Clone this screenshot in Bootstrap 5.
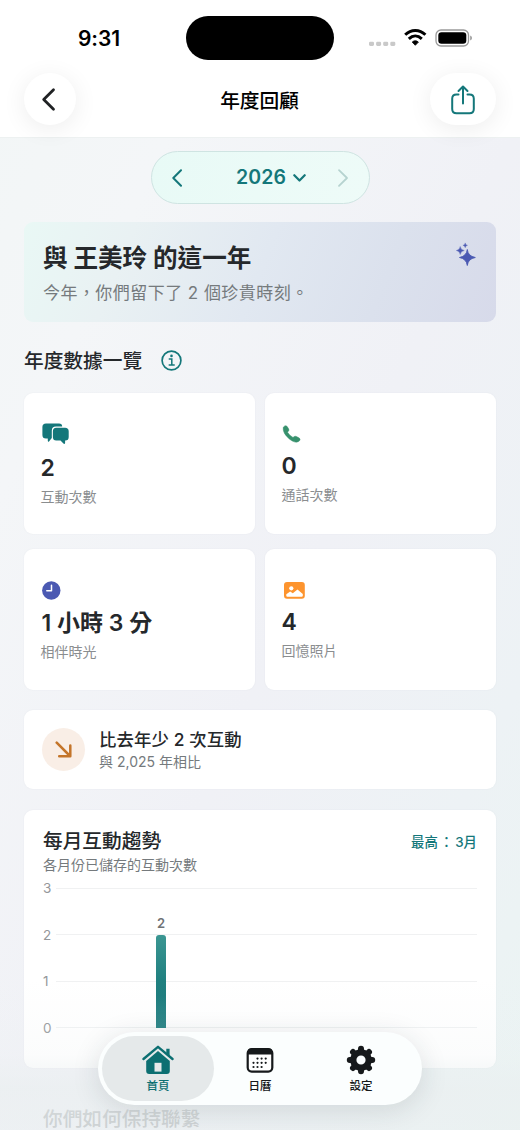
<!DOCTYPE html>
<html lang="zh-Hant">
<head>
<meta charset="utf-8">
<meta name="viewport" content="width=device-width, initial-scale=1">
<title>年度回顧</title>
<link href="https://cdn.jsdelivr.net/npm/bootstrap@5.3.0/dist/css/bootstrap.min.css" rel="stylesheet">
<style>
  :root { --teal: #14777a; --ink: #25282b; --soft: #757a7d; --indigo: #4b59b2; }
  html, body { height: 1130px; overflow: hidden; }
  body {
    font-family: Inter, "Noto Sans CJK TC", sans-serif; color: var(--ink);
    background: linear-gradient(115deg, #f2f6f6 0%, #f4f6f8 22%, #f0f1f6 55%, #edf2f5 80%, #ebf4f3 100%);
  }
  svg { display: block; flex: none; }
  .screen { width: 520px; height: 1130px; }
  .topbar { height: 138px; background: #fff; border-bottom: 1px solid #edf1f1; }
  .status { height: 72px; padding: 16px 48px 0 78px; }
  .clock { font-size: 21px; font-weight: 600; line-height: 46px; width: 108px; letter-spacing: -.1px; color: #000; }
  .island { width: 148px; height: 44px; border-radius: 22px; background: #000; }
  .titlebar { height: 54px; padding: 0 24px; }
  .round-btn { height: 52px; border-radius: 26px; background: #fff; box-shadow: 0 4px 24px rgba(0,0,0,.075); border: 0; padding: 0; }
  .page-title { font-size: 19.7px; font-weight: 500; line-height: 30px; color: #000; }
  .md { font-weight: 500; }
  .year-pill { width: 219px; height: 53px; border-radius: 27px; margin: 13px 0 0 150.5px; padding: 0 19px 0 20px; background: linear-gradient(100deg, #e8faf6, #eefbf8); border: 1px solid #cfe4e2; color: var(--teal); }
  .year-num { font-size: 19.5px; font-weight: 600; letter-spacing: .1px; }
  .hero { height: 100px; margin: 18px 24px 0; padding: 19px 20px 0 19px; border-radius: 9px; background: linear-gradient(112deg, #e9f8f5 0%, #e9f1f3 22%, #e1e8f1 50%, #dbe1ed 75%, #d7daea 100%); }
  .hero h1 { font-size: 24.6px; line-height: 34px; font-weight: 700; margin: 0; white-space: nowrap; }
  .hero p { font-size: 17px; letter-spacing: .45px; line-height: 26px; margin: 5px 0 0; color: var(--soft); white-space: nowrap; }
  .sec-title { font-size: 19.7px; line-height: 30px; margin: 0; white-space: nowrap; }
  .tile { border-radius: 9px; background: #fff; box-shadow: 0 0 2px rgba(30,50,80,.05); }
  .stats { display: grid; grid-template-columns: 231px 231px; grid-auto-rows: 141px; gap: 15px 10px; margin: 17px 24px 0; }
  .stat { padding: 27px 17px 0 16.5px; }
  .stat-ico { height: 28px; display: flex; align-items: center; }
  .stat-num { font-size: 23px; line-height: 30px; font-weight: 600; margin-top: 3px; white-space: nowrap; }
  .stat-lab { font-size: 14px; line-height: 20px; margin-top: 4px; color: #8a8d8f; }
  .compare { height: 79px; margin: 20px 24px 0; padding: 0 18px; }
  .disc { width: 43px; height: 43px; border-radius: 50%; background: #f9eee6; }
  .cmp-h { font-size: 17.4px; line-height: 24px; white-space: nowrap; letter-spacing: .1px; }
  .cmp-s { font-size: 14px; line-height: 20px; color: var(--soft); white-space: nowrap; }
  .trend { height: 258px; margin: 21px 24px 0; padding: 16px 19px 0; }
  .peak { font-size: 13.4px; font-weight: 500; color: var(--teal); line-height: 20px; margin-top: 6px; white-space: nowrap; }
  .peak span { padding: 0 2px; }
  .plot { margin-top: 5px; height: 160px; }
  .gridrow { height: 20px; margin-bottom: 26.5px; font-size: 13.5px; line-height: 20px; color: #94979a; }
  .gridrow span { width: 13px; }
  .gridrow i { flex: 1; height: 1px; background: #f0f1f2; }
  .bar-col { left: 113px; top: 46px; width: 10px; }
  .bar-val { font-size: 13px; line-height: 16px; font-weight: 600; color: #6f7376; position: absolute; top: -20px; }
  .bar-fill { width: 10px; height: 93px; border-radius: 3px 3px 0 0; background: linear-gradient(#3b9692, #17797a 65%, #1b7c7e); position: absolute; top: 0; }
  .next-title { margin: 40px 43px 0; line-height: 22px; color: #a9adaf; }
  .fade-bottom { left: 0; right: 0; bottom: 0; height: 150px; background: linear-gradient(rgba(234,239,240,0), rgba(234,239,240,.18) 50%, rgba(234,239,240,.72) 72%, rgba(234,239,240,.55)); pointer-events: none; }
  .tabbar { left: 98px; top: 1032px; width: 324px; height: 73px; border-radius: 37px; padding: 4px 4px; background: #fbfefe; box-shadow: 0 5px 28px rgba(30,50,55,.13); }
  .tab-item { font-size: 11.5px; line-height: 16px; font-weight: 500; color: #16191b; height: 65px; border-radius: 33px; padding-top: 8px; }
  .tab-item svg { margin-bottom: 2px; }
  .tab-item.on { background: #e5e9ea; color: #0c6f72; }
</style>
</head>
<body>
<div class="screen position-relative overflow-hidden">
  <header class="topbar">
    <div class="status d-flex">
      <div class="clock">9:31</div>
      <div class="island"></div>
      <div class="d-flex align-items-center ms-auto" style="height:44px">
        <svg width="103" height="24" viewBox="0 0 103 24">
          <g fill="#c9c9c9"><rect x="0" y="15.7" width="5" height="4.2" rx="1.3"/><rect x="7.1" y="15.7" width="5" height="4.2" rx="1.3"/><rect x="14.2" y="15.7" width="5" height="4.2" rx="1.3"/><rect x="21.3" y="15.7" width="5" height="4.2" rx="1.3"/></g>
          <g fill="none" stroke="#000" stroke-width="3"><path d="M36.200 8.700C42 3 50.600 3 56.400 8.700"/><path d="M39.800 12.800C43.800 9.100 48.800 9.100 52.800 12.800"/></g>
          <path d="M43.200 16.100C45.300 14.200 47.300 14.200 49.400 16.100L46.300 19.300Z" fill="#000" stroke="#000" stroke-width=".8" stroke-linejoin="round"/>
          <rect x="67" y="4" width="32.500" height="16" rx="5" fill="none" stroke="#9a9a9a" stroke-width="1.300"/>
          <rect x="69.300" y="6.300" width="28" height="11.400" rx="3.200"/>
          <path d="M101.200 9.400Q103 10.200 103 12T101.200 14.600Z" fill="#9a9a9a"/>
        </svg>
      </div>
    </div>
    <div class="titlebar d-flex align-items-center position-relative">
      <button class="round-btn d-flex align-items-center justify-content-center" style="width:52px" aria-label="返回">
        <svg width="20" height="26" viewBox="0 0 20 26" fill="none" stroke="#202224" stroke-width="2.800" stroke-linecap="round" stroke-linejoin="round"><path d="M13.500 3.700L3.700 13.500L13.500 23.300"/></svg>
      </button>
      <div class="page-title md flex-fill text-center" style="margin:3px 0 0 13px">年度回顧</div>
      <button class="round-btn d-flex align-items-center justify-content-center" style="width:66px" aria-label="分享">
        <svg width="26" height="32" viewBox="0 0 26 32" fill="none" stroke="#14777a" stroke-width="2" stroke-linecap="round" stroke-linejoin="round"><path d="M8.500 11.500H6.500Q2.200 11.500 2.200 15.800V26Q2.200 30.300 6.500 30.300H19.500Q23.800 30.300 23.800 26V15.800Q23.800 11.500 19.500 11.500H17.500M13 20.500V3.500M8.500 8L13 3.500L17.500 8"/></svg>
      </button>
    </div>
  </header>

  <div class="year-pill d-flex align-items-center justify-content-between">
    <svg width="12" height="20" viewBox="0 0 12 20" fill="none" stroke="currentColor" stroke-width="2" stroke-linecap="round" stroke-linejoin="round"><path d="M9 2.200L1.300 10L9 17.800"/></svg>
    <div class="d-flex align-items-center" style="gap:7px;margin-left:21px">
      <span class="year-num">2026</span>
      <svg width="13" height="8" viewBox="0 0 13 8" fill="none" stroke="currentColor" stroke-width="2.200" stroke-linecap="round" stroke-linejoin="round"><path d="M1.300 1.200L6.500 6.500L11.700 1.200"/></svg>
    </div>
    <svg width="12" height="20" viewBox="0 0 12 20" fill="none" stroke="#b6d3d0" stroke-width="1.800" stroke-linecap="round" stroke-linejoin="round"><path d="M2 2.200L10 10L2 17.800"/></svg>
  </div>

  <section class="hero d-flex justify-content-between">
    <div>
      <h1>與 王美玲 的這一年</h1>
      <p>今年，你們留下了 2 個珍貴時刻。</p>
    </div>
    <svg width="20" height="24" viewBox="0 0 20 24" fill="#4b59b2" style="margin-top:1px"><path d="M11.300 7.500Q12 14.200 19.300 15.500Q12 16.800 11.300 23.500Q10.500 16.800 3.500 15.500Q10.500 14.200 11.300 7.500Z" stroke="#4b59b2" stroke-width=".9"/><path d="M4.200 4.500Q4.600 7.900 8.200 8.500Q4.600 9.100 4.200 12.500Q3.800 9.100 .4 8.500Q3.800 7.900 4.200 4.500Z" stroke="#4b59b2" stroke-width=".4"/><path d="M9.200 .9Q9.500 3 11.500 3.300Q9.500 3.600 9.200 5.700Q8.900 3.600 6.900 3.300Q8.900 3 9.200 .9Z" stroke="#4b59b2" stroke-width=".3"/></svg>
  </section>

  <div class="d-flex align-items-center" style="margin:24px 24px 0;gap:19px">
    <h2 class="sec-title md">年度數據一覽</h2>
    <svg width="21" height="21" viewBox="0 0 21 21" fill="none" stroke="#14777a" style="margin-bottom:2px"><circle cx="10.500" cy="10.500" r="9.400" stroke-width="1.700"/><circle cx="10.500" cy="5.900" r="1.300" fill="#14777a" stroke="none"/><path d="M8.300 9H10.800V15M8.200 15.100H13.200" stroke-width="1.500" stroke-linecap="round"/></svg>
  </div>

  <section class="stats">
    <div class="tile stat">
      <div class="stat-ico"><svg width="28" height="22" viewBox="0 0 28 22" fill="#14777a" style="margin-left:1px"><path d="M4 .5H17Q20.200 .5 20.200 3.600H14Q9.800 3.600 9.800 7.800V15L7 18.500Q6 19.300 5.800 17.800V15.500H4Q.4 15.500 .4 12V4Q.4 .5 4 .5Z"/><path d="M14.200 4.700H23Q26.700 4.700 26.700 8.200V14Q26.700 17.600 23.300 17.600H23.100V20Q22.800 21.700 21.400 20.600L18.500 17.600H14.200Q10.900 17.600 10.900 14V8.200Q10.900 4.700 14.200 4.700Z"/></svg></div>
      <div class="stat-num" style="margin-top:5px">2</div><div class="stat-lab">互動次數</div>
    </div>
    <div class="tile stat">
      <div class="stat-ico"><svg width="19" height="18" viewBox="0 0 19 18" fill="#37916d" stroke="#37916d" stroke-width=".5"><path d="M1.300 2.200L2.800 .9Q4.100 .3 5.200 1.600L6.700 4Q7.300 5.300 6.300 6.200L5.500 7.200Q7.300 10.400 11 12.500L12.200 11.600Q13.100 10.900 14.400 11.500L17.300 13.100Q18.600 14.300 17.700 15.500L16.200 16.700Q12.400 18.300 7.300 13.900Q.3 8 1.300 2.200Z"/></svg></div>
      <div class="stat-num">0</div><div class="stat-lab">通話次數</div>
    </div>
    <div class="tile stat">
      <div class="stat-ico"><svg width="19" height="19" viewBox="0 0 19 19" style="margin-left:1px"><circle cx="9.300" cy="9.500" r="9.200" fill="#4b59b2"/><path d="M9.500 4.200V9.800H4.800" fill="none" stroke="#fff" stroke-width="1.500" stroke-linecap="round" stroke-linejoin="round"/></svg></div>
      <div class="stat-num" style="margin:4px 0 0 1px">1 小時 3 分</div><div class="stat-lab">相伴時光</div>
    </div>
    <div class="tile stat">
      <div class="stat-ico"><svg width="21" height="17" viewBox="0 0 21 17" style="margin-left:2px"><rect width="20.800" height="16.800" rx="3" fill="#fd942e"/><circle cx="7.300" cy="6.300" r="2.100" fill="#fff"/><path d="M2.300 14V12.300L6.200 9.400L8.800 11.200L13.500 7.400L18.800 12V14Q18.500 14.700 17.800 14.700H3.300Q2.500 14.700 2.300 14Z" fill="#fff"/></svg></div>
      <div class="stat-num">4</div><div class="stat-lab">回憶照片</div>
    </div>
  </section>

  <section class="tile compare d-flex align-items-center">
    <div class="disc d-flex align-items-center justify-content-center">
      <svg width="17" height="17" viewBox="0 0 17 17" fill="none" stroke="#c4752a" stroke-width="2.500" stroke-linecap="round" stroke-linejoin="round"><path d="M1.700 1.700L15 15M15.300 4.500V15.300H4.200"/></svg>
    </div>
    <div style="margin-left:14px">
      <div class="cmp-h md">比去年少 2 次互動</div>
      <div class="cmp-s">與 2,025 年相比</div>
    </div>
  </section>

  <section class="tile trend">
    <div class="d-flex justify-content-between">
      <div>
        <h2 class="sec-title md">每月互動趨勢</h2>
        <div class="cmp-s" style="line-height:17px">各月份已儲存的互動次數</div>
      </div>
      <div class="peak">最高<span>：</span>3月</div>
    </div>
    <div class="plot position-relative">
      <div class="gridrow d-flex align-items-center"><span>3</span><i></i></div>
      <div class="gridrow d-flex align-items-center"><span>2</span><i></i></div>
      <div class="gridrow d-flex align-items-center"><span>1</span><i></i></div>
      <div class="gridrow d-flex align-items-center"><span>0</span><i></i></div>
      <div class="bar-col position-absolute d-flex justify-content-center" style="top:57px"><span class="bar-val">2</span><div class="bar-fill"></div></div>
    </div>
  </section>

  <h2 class="sec-title md next-title">你們如何保持聯繫</h2>

  <div class="fade-bottom position-absolute"></div>

  <nav class="tabbar position-absolute d-flex">
    <div class="tab-item on d-flex flex-column align-items-center" style="width:112px">
      <svg width="32" height="32" viewBox="0 0 32 32" fill="#0c6f72"><path d="M1.500 15L16 2.800L30.500 15" fill="none" stroke="#0c6f72" stroke-width="2.400" stroke-linecap="round" stroke-linejoin="round"/><path d="M24.300 4.800H27.600V12L24.300 9.200Z"/><path d="M4.200 17L16 7L27.800 17V27Q27.800 30 24.800 30H7.200Q4.200 30 4.200 27Z"/><path d="M12.500 18.800H19.500V27.600H12.500Z" fill="#e5e9ea"/></svg>
      <span>首頁</span>
    </div>
    <div class="tab-item d-flex flex-column align-items-center" style="width:92px">
      <svg width="28" height="32" viewBox="0 0 28 32"><rect x="1.700" y="5" width="24.600" height="22.600" rx="4" fill="#fff" stroke="#16191b" stroke-width="2.200"/><path d="M2 10.500V7Q2 4.800 5 4.800H23Q26 4.800 26 7V10.500Z" fill="#16191b"/><g fill="#16191b"><circle cx="11.500" cy="14.600" r="1.100"/><circle cx="15.600" cy="14.600" r="1.100"/><circle cx="19.700" cy="14.600" r="1.100"/><circle cx="7.500" cy="18.800" r="1.100"/><circle cx="11.500" cy="18.800" r="1.100"/><circle cx="15.600" cy="18.800" r="1.100"/><circle cx="19.700" cy="18.800" r="1.100"/><circle cx="7.500" cy="23" r="1.100"/><circle cx="11.500" cy="23" r="1.100"/><circle cx="15.600" cy="23" r="1.100"/></g></svg>
      <span>日曆</span>
    </div>
    <div class="tab-item d-flex flex-column align-items-center" style="width:110px">
      <svg width="30" height="32" viewBox="-15 -16 30 32" stroke="#16191b" fill="none"><circle r="7.700" stroke-width="6.200"/><g stroke-width="6" stroke-linecap="round"><path d="M0-9.500V-11.200M0 9.500V11.200M-9.500 0H-11.200M9.500 0H11.200M6.700-6.700L8-8M-6.700-6.700L-8-8M6.700 6.700L8 8M-6.700 6.700L-8 8"/></g></svg>
      <span>設定</span>
    </div>
  </nav>
</div>
<script src="https://cdn.jsdelivr.net/npm/bootstrap@5.3.0/dist/js/bootstrap.bundle.min.js"></script>
</body>
</html>
